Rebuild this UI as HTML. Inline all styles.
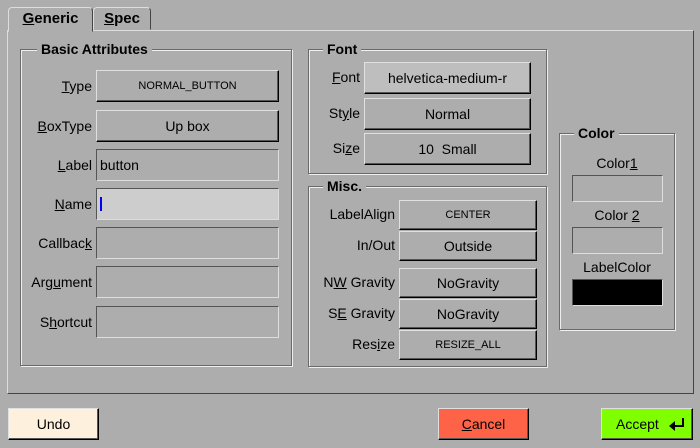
<!DOCTYPE html><html><head><style>
body{margin:0;width:700px;height:448px;background:#adadad;position:relative;overflow:hidden;font-family:"Liberation Sans",sans-serif;font-size:14px;color:#000}
div{position:absolute;box-sizing:border-box}
.up{border:1px solid;border-color:#e0e0e0 #000 #000 #e0e0e0;box-shadow:inset -1px -1px 0 #555;text-align:center;display:flex;align-items:center;justify-content:center}
.in{border:1px solid;border-color:#555 #ddd #ddd #555;display:flex;align-items:center;padding-left:3px}
.fr{border:1px solid #6a6a6a;box-shadow:1px 1px 0 #eee,inset 1px 1px 0 #eee}
.lg{background:#adadad;font-weight:bold;padding:0 4px;top:-10px;font-size:14px;line-height:18px}
.lb{text-align:right;width:90px;line-height:18px}
.sm{font-size:11px}
u{text-decoration:underline}
</style></head><body>
<div style="left:7px;top:30px;width:687px;height:364px;border:1px solid;border-color:#ddd #444 #444 #ddd"></div>
<div style="left:8px;top:7px;width:85px;height:25px;border:1px solid;border-color:#ddd #444 transparent #ddd;border-radius:4px 4px 0 0;background:#adadad;font-weight:bold;font-size:15px;text-align:center;line-height:22px"><u>G</u>eneric</div>
<div style="left:93px;top:7px;width:58px;height:23px;border:1px solid;border-color:#ddd #444 transparent #ddd;border-radius:4px 4px 0 0;font-weight:bold;font-size:15px;text-align:center;line-height:22px"><u>S</u>pec</div>

<div class="fr" style="left:20px;top:49px;width:272px;height:317px"><div class="lg" style="left:16px">Basic Attributes</div></div>
<div class="lb" style="left:2px;top:77px"><u>T</u>ype</div>
<div class="up sm" style="left:96px;top:70px;width:183px;height:32px">NORMAL_BUTTON</div>
<div class="lb" style="left:2px;top:117px"><u>B</u>oxType</div>
<div class="up" style="left:96px;top:110px;width:183px;height:32px">Up box</div>
<div class="lb" style="left:2px;top:156px"><u>L</u>abel</div>
<div class="in" style="left:96px;top:149px;width:183px;height:32px">button</div>
<div class="lb" style="left:2px;top:195px"><u>N</u>ame</div>
<div class="in" style="left:96px;top:188px;width:183px;height:32px;background:#cdcdcd"><span style="display:inline-block;width:2px;height:14px;background:#00f;margin-left:0"></span></div>
<div class="lb" style="left:2px;top:234px">Callbac<u>k</u></div>
<div class="in" style="left:96px;top:227px;width:183px;height:32px"></div>
<div class="lb" style="left:2px;top:273px">Arg<u>u</u>ment</div>
<div class="in" style="left:96px;top:266px;width:183px;height:32px"></div>
<div class="lb" style="left:2px;top:313px">S<u>h</u>ortcut</div>
<div class="in" style="left:96px;top:306px;width:183px;height:32px"></div>

<div class="fr" style="left:308px;top:49px;width:239px;height:125px"><div class="lg" style="left:14px">Font</div></div>
<div class="lb" style="left:270px;top:68px"><u>F</u>ont</div>
<div class="up" style="left:364px;top:62px;width:167px;height:32px;background:#bebebe">helvetica-medium-r</div>
<div class="lb" style="left:270px;top:104px">St<u>y</u>le</div>
<div class="up" style="left:364px;top:98px;width:167px;height:32px">Normal</div>
<div class="lb" style="left:270px;top:139px">Si<u>z</u>e</div>
<div class="up" style="left:364px;top:133px;width:167px;height:32px">10&nbsp; Small</div>

<div class="fr" style="left:308px;top:186px;width:239px;height:181px"><div class="lg" style="left:14px">Misc.</div></div>
<div class="lb" style="left:305px;top:205px">LabelAlign</div>
<div class="up sm" style="left:399px;top:200px;width:138px;height:30px">CENTER</div>
<div class="lb" style="left:305px;top:236px">In/Out</div>
<div class="up" style="left:399px;top:231px;width:138px;height:30px">Outside</div>
<div class="lb" style="left:305px;top:273px">N<u>W</u> Gravity</div>
<div class="up" style="left:399px;top:268px;width:138px;height:30px">NoGravity</div>
<div class="lb" style="left:305px;top:304px">S<u>E</u> Gravity</div>
<div class="up" style="left:399px;top:299px;width:138px;height:30px">NoGravity</div>
<div class="lb" style="left:305px;top:335px">Res<u>i</u>ze</div>
<div class="up sm" style="left:399px;top:330px;width:138px;height:30px">RESIZE_ALL</div>

<div class="fr" style="left:559px;top:133px;width:116px;height:197px"><div class="lg" style="left:14px">Color</div></div>
<div style="left:559px;top:155px;width:116px;text-align:center">Color<u>1</u></div>
<div class="in" style="left:572px;top:175px;width:91px;height:27px"></div>
<div style="left:559px;top:207px;width:116px;text-align:center">Color <u>2</u></div>
<div class="in" style="left:572px;top:227px;width:91px;height:27px"></div>
<div style="left:559px;top:259px;width:116px;text-align:center">LabelColor</div>
<div class="in" style="left:572px;top:279px;width:91px;height:27px;background:#000"></div>

<div class="up" style="left:8px;top:408px;width:91px;height:32px;background:#fdf0dc">Undo</div>
<div class="up" style="left:438px;top:408px;width:91px;height:32px;background:#ff6347"><u>C</u>ancel</div>
<div class="up" style="left:601px;top:408px;width:92px;height:32px;background:#7fff00;justify-content:flex-start;padding-left:14px">Accept
<svg width="18" height="14" style="position:absolute;right:6px;top:8px"><path d="M15 1V9H6" stroke="#000" stroke-width="2" fill="none"/><path d="M1 9L7 4V14Z" fill="#000"/></svg></div>
</body></html>
